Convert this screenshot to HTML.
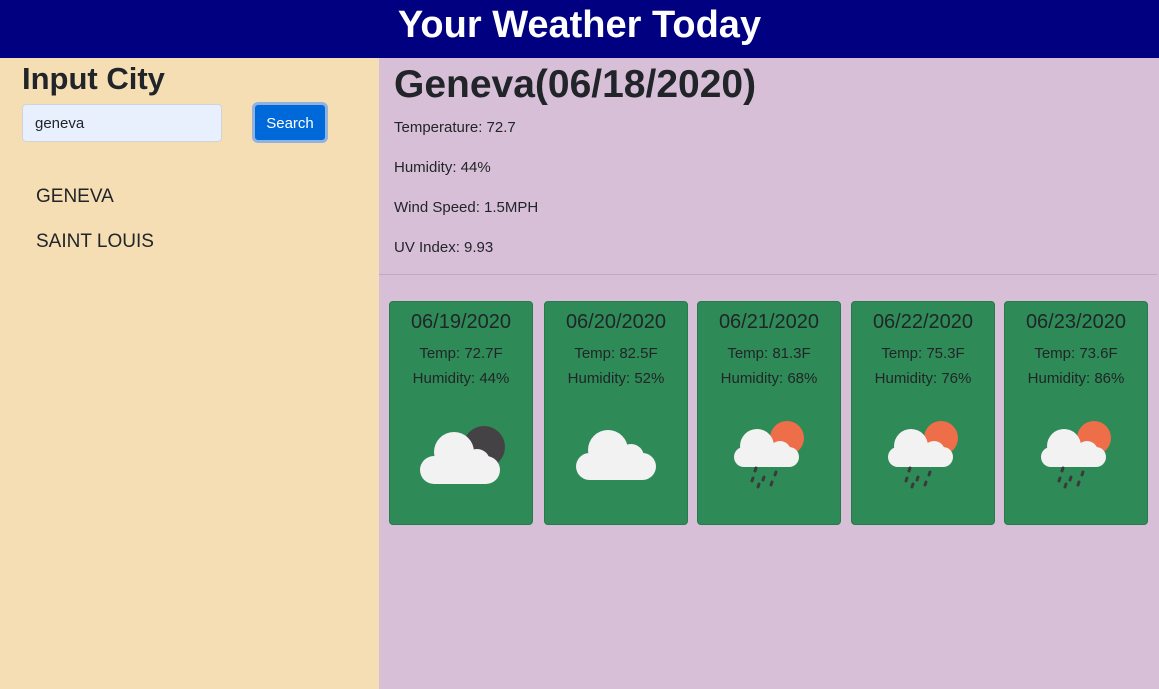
<!DOCTYPE html>
<html><head><meta charset="utf-8"><style>
*{margin:0;padding:0;box-sizing:border-box}
body{width:1159px;height:689px;overflow:hidden;font-family:"Liberation Sans",sans-serif;color:#212529;position:relative;background:#d8bfd8}
.hdr{position:absolute;left:0;top:0;width:1159px;height:58px;background:#000080;color:#fff;font-size:38px;font-weight:bold;text-align:center;line-height:50px}
.left{position:absolute;left:0;top:58px;width:379px;height:631px;background:#f5deb3}
.right{position:absolute;left:379px;top:58px;width:778px;height:631px;background:#d8bfd8}
.abs{position:absolute;white-space:nowrap}
.card{position:absolute;top:301px;width:144px;height:224px;background:#2e8b57;border:1px solid #267a4b;border-radius:4px;text-align:center}
.card .d{position:absolute;top:8px;left:0;right:0;font-size:20px;line-height:24px}
.card .t{position:absolute;top:39px;left:0;right:0;font-size:15px;line-height:25px}
.card svg{position:absolute;left:0;top:0}
</style></head><body>
<div class="hdr">Your Weather Today</div>
<div class="left"></div>
<div class="right"></div>
<div class="abs" style="left:22px;top:60px;font-size:31px;font-weight:bold;line-height:38px">Input City</div>
<div class="abs" style="left:22px;top:104px;width:200px;height:38px;background:#e8f0fe;border:1px solid #ced4da;border-radius:4px;font-size:15px;line-height:38px;padding-left:12px">geneva</div>
<div class="abs" style="left:252px;top:102px;width:76px;height:41px;border:3px solid #8fb2e0;border-radius:6px;background:#0069d9;color:#fff;font-size:15px;text-align:center;line-height:37px">Search</div>
<div class="abs" style="left:36px;top:185px;font-size:19px;line-height:24px">GENEVA</div>
<div class="abs" style="left:36px;top:230px;font-size:19px;line-height:24px">SAINT LOUIS</div>
<div class="abs" style="left:394px;top:62px;font-size:39px;font-weight:bold;line-height:46px">Geneva(06/18/2020)</div>
<div class="abs" style="left:394px;top:118px;font-size:15px;line-height:20px">Temperature: 72.7</div>
<div class="abs" style="left:394px;top:158px;font-size:15px;line-height:20px">Humidity: 44%</div>
<div class="abs" style="left:394px;top:198px;font-size:15px;line-height:20px">Wind Speed: 1.5MPH</div>
<div class="abs" style="left:394px;top:238px;font-size:15px;line-height:20px">UV Index: 9.93</div>
<div class="abs" style="left:379px;top:274px;width:778px;height:1px;background:#c2a8c2"></div>

<div class="card" style="left:389px"><div class="d">06/19/2020</div><div class="t">Temp: 72.7F<br>Humidity: 44%</div>
<svg width="144" height="224"><circle cx="94" cy="145" r="21" fill="#454246"/><circle cx="64" cy="150" r="20" fill="#f2f2f2"/><circle cx="87" cy="160" r="13" fill="#f2f2f2"/><rect x="30" y="154" width="80" height="28" rx="14" fill="#f2f2f2"/></svg></div>

<div class="card" style="left:544px"><div class="d">06/20/2020</div><div class="t">Temp: 82.5F<br>Humidity: 52%</div>
<svg width="144" height="224"><circle cx="63" cy="148" r="20" fill="#f2f2f2"/><circle cx="86" cy="155" r="13" fill="#f2f2f2"/><rect x="31" y="151" width="80" height="27" rx="13.5" fill="#f2f2f2"/></svg></div>

<div class="card" style="left:697px"><div class="d">06/21/2020</div><div class="t">Temp: 81.3F<br>Humidity: 68%</div>
<svg width="144" height="224"><circle cx="89" cy="136" r="17" fill="#ee6e4a"/><circle cx="59" cy="144" r="17" fill="#f2f2f2"/><circle cx="82" cy="150" r="11" fill="#f2f2f2"/><rect x="36" y="145" width="65" height="20" rx="10" fill="#f2f2f2"/><g stroke="#3a3a3a" stroke-width="3" stroke-linecap="round"><path d="M58 166l-1 3M55 176l-1 3M66 175l-1 3M78 170l-1 3M61 182l-1 3M74 180l-1 3"/></g></svg></div>

<div class="card" style="left:851px"><div class="d">06/22/2020</div><div class="t">Temp: 75.3F<br>Humidity: 76%</div>
<svg width="144" height="224"><circle cx="89" cy="136" r="17" fill="#ee6e4a"/><circle cx="59" cy="144" r="17" fill="#f2f2f2"/><circle cx="82" cy="150" r="11" fill="#f2f2f2"/><rect x="36" y="145" width="65" height="20" rx="10" fill="#f2f2f2"/><g stroke="#3a3a3a" stroke-width="3" stroke-linecap="round"><path d="M58 166l-1 3M55 176l-1 3M66 175l-1 3M78 170l-1 3M61 182l-1 3M74 180l-1 3"/></g></svg></div>

<div class="card" style="left:1004px"><div class="d">06/23/2020</div><div class="t">Temp: 73.6F<br>Humidity: 86%</div>
<svg width="144" height="224"><circle cx="89" cy="136" r="17" fill="#ee6e4a"/><circle cx="59" cy="144" r="17" fill="#f2f2f2"/><circle cx="82" cy="150" r="11" fill="#f2f2f2"/><rect x="36" y="145" width="65" height="20" rx="10" fill="#f2f2f2"/><g stroke="#3a3a3a" stroke-width="3" stroke-linecap="round"><path d="M58 166l-1 3M55 176l-1 3M66 175l-1 3M78 170l-1 3M61 182l-1 3M74 180l-1 3"/></g></svg></div>
</body></html>
